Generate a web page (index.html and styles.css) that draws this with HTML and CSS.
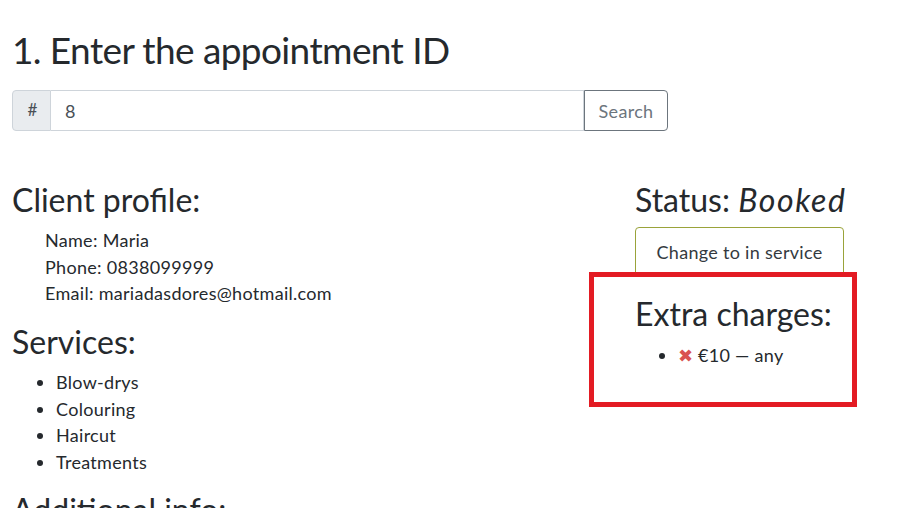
FILE: index.html
```html
<!DOCTYPE html>
<html>
<head>
<meta charset="utf-8">
<link rel="stylesheet" href="styles.css">
</head>
<body>
<div class="page">
  <h1 class="title">1. Enter the appointment ID</h1>
  <div class="input-group">
    <span class="addon">#</span>
    <input class="field" type="text" value="8">
    <button class="btn-search">Search</button>
  </div>
  <div class="row">
    <div class="col-main">
      <h2 class="heading">Client profile:</h2>
      <ul class="profile">
        <li>Name: Maria</li>
        <li>Phone: 0838099999</li>
        <li>Email: mariadasdores@hotmail.com</li>
      </ul>
      <h2 class="heading">Services:</h2>
      <ul class="services">
        <li>Blow-drys</li>
        <li>Colouring</li>
        <li>Haircut</li>
        <li>Treatments</li>
      </ul>
      <h2 class="heading">Additional info:</h2>
    </div>
    <div class="col-side">
      <h2 class="heading">Status: <em>Booked</em></h2>
      <button class="btn-status">Change to in service</button>
      <div class="extra">
        <h2 class="heading">Extra charges:</h2>
        <ul class="charges">
          <li><span class="cross">&#10006;</span> €10 — any</li>
        </ul>
      </div>
    </div>
  </div>
</div>
</body>
</html>
```
FILE: styles.css
```css
html, body {
  margin: 0;
  padding: 0;
  background: #fff;
}
body {
  font-family: "Lato", "Open Sans", sans-serif;
  color: #25292d;
  font-size: 18px;
  letter-spacing: 0.3px;
  line-height: 26.5px;
  overflow: hidden;
}
.page {
  padding: 27px 12px 0 12px;
}
.title {
  font-size: 37px;
  font-weight: 400;
  letter-spacing: -0.6px;
  line-height: 45px;
  margin: 0 0 18px 0;
}
.input-group {
  display: flex;
  width: 656px;
  height: 41px;
  margin-bottom: 50px;
}
.addon {
  width: 39px;
  box-sizing: border-box;
  display: flex;
  align-items: center;
  justify-content: center;
  background: #e9ecef;
  border: 1px solid #ced4da;
  border-radius: 4px 0 0 4px;
  color: #495057;
  font-size: 17px;
  padding-left: 2px;
}
.field {
  flex: 1;
  min-width: 0;
  border: 1px solid #ced4da;
  border-left: none;
  padding: 0 14px;
  font-family: inherit;
  font-size: 18px;
  color: #495057;
  outline: none;
}
.btn-search {
  width: 84px;
  border: 1px solid #6c757d;
  border-radius: 0 4px 4px 0;
  background: #fff;
  color: #6c757d;
  font-family: inherit;
  font-size: 18px;
  letter-spacing: 0.3px;
  padding: 0;
}
.row {
  display: flex;
}
.col-main {
  width: 623px;
}
.col-side {
  flex: 1;
}
.heading {
  font-size: 32px;
  font-weight: 400;
  letter-spacing: 0;
  line-height: 1.2;
  margin: 0 0 8px 0;
}
.heading em {
  font-style: italic;
  letter-spacing: 1.6px;
}
.profile {
  list-style: none;
  margin: 0 0 16px 0;
  padding-left: 33px;
}
.services {
  margin: 0 0 16px 0;
  padding-left: 44px;
}
.btn-status {
  display: block;
  width: 209px;
  height: 49px;
  border: 1px solid #9aa33a;
  border-radius: 4px;
  background: #fff;
  color: #343a40;
  font-family: inherit;
  font-size: 18px;
  letter-spacing: 0.3px;
  padding: 0;
  margin-bottom: 19px;
}
.extra {
  position: relative;
}
.extra::before {
  content: "";
  position: absolute;
  left: -46px;
  top: -23px;
  width: 258px;
  height: 125px;
  border: 5px solid #e31b23;
}
.charges {
  margin: 0;
  padding-left: 43px;
}
.cross {
  color: #d9534f;
  font-size: 18px;
  letter-spacing: 0;
}
```
